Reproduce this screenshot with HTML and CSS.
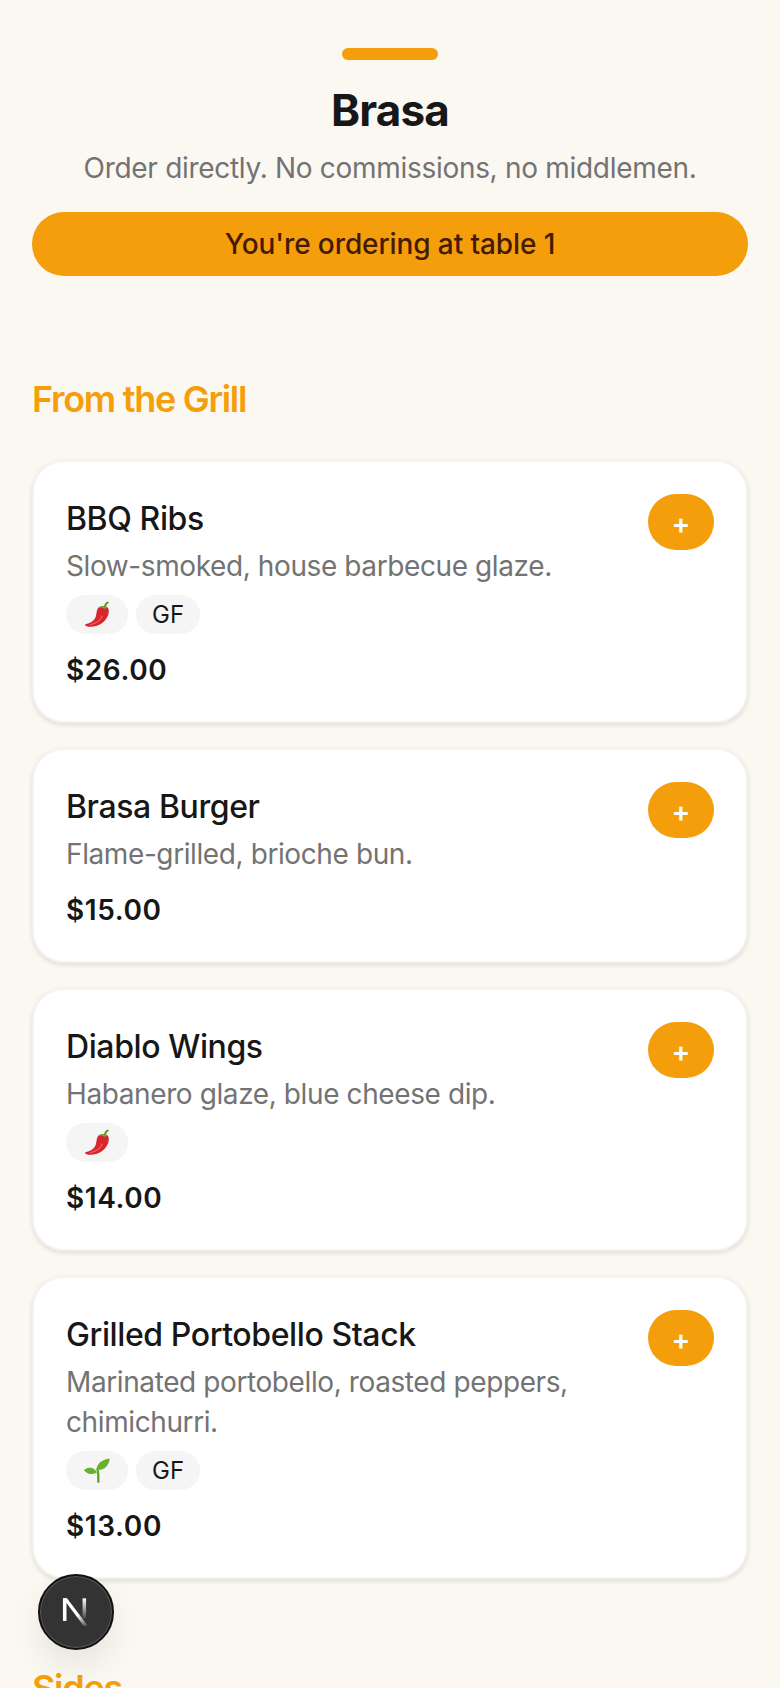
FILE: index.html
```html
<!DOCTYPE html>
<html lang="en">
<head>
    <meta charset="UTF-8">
    <meta name="viewport" content="width=device-width, initial-scale=1.0">
    <title>Brasa</title>
    <link rel="stylesheet" href="styles.css">
</head>
<body>
    <svg class="defs" width="0" height="0" aria-hidden="true">
        <symbol id="chili" viewBox="1 2 26 26">
            <path d="M21.500 7C21.500 5.500 22.500 4.200 24 3.500" fill="none" stroke="#5c9a2b" stroke-width="1.800" stroke-linecap="round"/>
            <path d="M15 8.500C17 6.500 23 6 24.500 9C26.500 14 22 22 15 24.500C11 26 6 26.500 3.500 25C2.500 24.400 3 23.600 4 23.400C9 22.500 12 19.500 13 16C13.800 13 13.500 10.500 15 8.500z" fill="#d8262c"/>
            <path d="M15 8.500c2-2.400 8-2.600 9.500.5-1.500-.8-2.500-.5-3.200.5-1.500-1-4-1.500-6.300-1z" fill="#6aa82f"/>
            <path d="M8 24c4-.8 9-3.500 11-8" fill="none" stroke="#ee5a60" stroke-width="1.200" stroke-linecap="round"/>
        </symbol>
        <symbol id="sprout" viewBox="1 2 26 26">
            <path d="M14.500 13c.6 3.500 1 7.500.8 12" fill="none" stroke="#5fa52c" stroke-width="2.200" stroke-linecap="round"/>
            <path d="M13.800 14c-.4-5 4-9.500 12-10.500-.3 6-5 11.500-12 10.500z" fill="#69b02f"/>
            <path d="M13.800 16.500C12 12 7 10.500 1.800 14c2.700 4 7.700 5 12 2.500z" fill="#69b02f"/>
        </symbol>
    </svg>

    <header class="top">
        <div class="accentBar"></div>
        <h1>Brasa</h1>
        <p class="tagline">Order directly. No commissions, no middlemen.</p>
        <div class="tableBanner">You're ordering at table 1</div>
    </header>

    <section class="menuSection">
        <h2>From the Grill</h2>
        <ul class="itemList">
            <li class="item">
                <div class="itemBody">
                    <h3>BBQ Ribs</h3>
                    <p class="desc">Slow-smoked, house barbecue glaze.</p>
                    <div class="tags">
                        <span class="tag"><svg class="tagIcon"><use href="#chili"/></svg></span>
                        <span class="tag">GF</span>
                    </div>
                    <p class="price">$26.00</p>
                </div>
                <button class="addBtn" type="button">+</button>
            </li>
            <li class="item">
                <div class="itemBody">
                    <h3>Brasa Burger</h3>
                    <p class="desc">Flame-grilled, brioche bun.</p>
                    <p class="price">$15.00</p>
                </div>
                <button class="addBtn" type="button">+</button>
            </li>
            <li class="item">
                <div class="itemBody">
                    <h3>Diablo Wings</h3>
                    <p class="desc">Habanero glaze, blue cheese dip.</p>
                    <div class="tags">
                        <span class="tag"><svg class="tagIcon"><use href="#chili"/></svg></span>
                    </div>
                    <p class="price">$14.00</p>
                </div>
                <button class="addBtn" type="button">+</button>
            </li>
            <li class="item">
                <div class="itemBody">
                    <h3>Grilled Portobello Stack</h3>
                    <p class="desc">Marinated portobello, roasted peppers, chimichurri.</p>
                    <div class="tags">
                        <span class="tag"><svg class="tagIcon"><use href="#sprout"/></svg></span>
                        <span class="tag">GF</span>
                    </div>
                    <p class="price">$13.00</p>
                </div>
                <button class="addBtn" type="button">+</button>
            </li>
        </ul>
    </section>

    <section class="menuSection">
        <h2>Sides</h2>
    </section>

    <div class="devBadge">
        <svg width="38" height="38" viewBox="0 0 32 32" aria-hidden="true">
            <defs>
                <linearGradient id="nFade" x1="0" y1="0" x2="0" y2="1">
                    <stop offset="0" stop-color="#fff"/>
                    <stop offset="1" stop-color="#fff" stop-opacity="0.1"/>
                </linearGradient>
                <linearGradient id="nDiag" x1="0" y1="0" x2="1" y2="1">
                    <stop offset="0.6" stop-color="#fff"/>
                    <stop offset="1" stop-color="#fff" stop-opacity="0.1"/>
                </linearGradient>
            </defs>
            <path d="M5 4.500h3v19H5z" fill="#fff"/>
            <path d="M5 4.500h3.400L26 27.500h-3.600z" fill="url(#nDiag)"/>
            <path d="M21.500 4.500h3v17h-3z" fill="url(#nFade)"/>
        </svg>
    </div>
</body>
</html>
```

FILE: styles.css
```css
* {box-sizing: border-box;}
html, body {margin: 0; height: 1688px; overflow: hidden;}
body {
    position: relative;
    padding: 48px 32px 0;
    background-color: #fbf8f2;
    color: #171717;
    font-family: Inter, "Liberation Sans", sans-serif;
}
.defs {position: absolute;}

.top {display: flex; flex-direction: column; align-items: center; margin-bottom: 103px;}
.accentBar {width: 96px; height: 12px; border-radius: 6px; background-color: #f59e0b;}
h1 {margin: 22px 0 0; font-size: 44px; line-height: 56px; font-weight: 700; letter-spacing: -0.8px;}
.tagline {margin: 10px 0 0; font-size: 28px; line-height: 40px; letter-spacing: -0.3px; color: #737373;}
.tableBanner {
    width: 100%;
    height: 64px;
    margin-top: 24px;
    border-radius: 32px;
    background-color: #f59e0b;
    color: #451a03;
    font-size: 28px;
    font-weight: 500;
    line-height: 64px;
    letter-spacing: -0.1px;
    text-align: center;
}

.menuSection {margin-top: 89px;}
h2 {margin: 0; font-size: 36px; line-height: 40px; font-weight: 600; letter-spacing: -1.3px; color: #f59e0b;}
.itemList {list-style: none; margin: 41px 0 0; padding: 0; display: flex; flex-direction: column; gap: 25px;}
.item {
    display: flex;
    justify-content: space-between;
    align-items: flex-start;
    gap: 24px;
    padding: 30px 32px 31px;
    border: 2px solid #f5f3ee;
    border-radius: 32px;
    background-color: #fff;
    box-shadow: 0 2px 5px rgba(0, 0, 0, 0.12);
}
.itemBody {flex: 1; min-width: 0;}
h3 {margin: 3px 0 0; font-size: 32px; line-height: 48px; font-weight: 500; letter-spacing: -0.4px;}
.desc {margin: 3px 0 0; font-size: 28px; line-height: 40px; letter-spacing: -0.4px; color: #737373;}
.tags {display: flex; gap: 8px; margin-top: 9px;}
.tag {
    display: flex;
    align-items: center;
    justify-content: center;
    height: 39px;
    padding: 0 16px;
    border-radius: 20px;
    background-color: #f5f5f5;
    font-size: 24px;
}
.tagIcon {width: 30px; height: 28px;}
.price {margin: 16px 0 0; font-size: 28px; line-height: 40px; font-weight: 600; letter-spacing: 0.6px;}
.addBtn {
    flex: none;
    width: 66px;
    height: 56px;
    margin-top: 2px;
    border: none;
    border-radius: 28px;
    padding: 4px 0 0;
    background-color: #f59e0b;
    color: #fff;
    font-family: inherit;
    font-size: 28px;
    font-weight: 600;
}

.devBadge {
    position: absolute;
    left: 38px;
    top: 1574px;
    width: 76px;
    height: 76px;
    display: flex;
    align-items: center;
    justify-content: center;
    border-radius: 50%;
    border: 2px solid #111;
    background-color: #333;
    box-shadow: inset 0 0 0 1px #5a5a5a, 0 16px 32px rgba(0, 0, 0, 0.08);
}
```
